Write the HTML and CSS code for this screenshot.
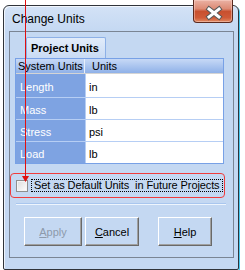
FILE: index.html
```html
<!DOCTYPE html>
<html>
<head>
<meta charset="utf-8">
<title>Change Units</title>
<link rel="stylesheet" href="styles.css">
</head>
<body>
<div class="window">
  <div class="titlebar"><span class="title">Change Units</span></div>
  <div class="closebtn">
    <svg width="40" height="23" viewBox="0 0 40 23">
      <path d="M15 9 L25 17 M25 9 L15 17" stroke="#5a5a5a" stroke-width="5" stroke-linecap="square" fill="none"/>
      <path d="M15 9 L25 17 M25 9 L15 17" stroke="#ffffff" stroke-width="3" stroke-linecap="square" fill="none"/>
    </svg>
  </div>
  <div class="client">
    <div class="tabs"><div class="tab">Project Units</div></div>
    <div class="grid">
      <div class="ghead">
        <div class="hc hc1">System Units</div>
        <div class="hc hc2">Units</div>
      </div>
      <div class="row first"><div class="lab">Length</div><div class="val">in</div></div>
      <div class="row"><div class="lab">Mass</div><div class="val">lb</div></div>
      <div class="row"><div class="lab">Stress</div><div class="val">psi</div></div>
      <div class="row last"><div class="lab">Load</div><div class="val">lb</div></div>
    </div>
    <div class="defaults">
      <span class="check"></span>
      <span class="focus">Set as Default Units&nbsp; in Future Projects</span>
    </div>
    <div class="sep"></div>
    <div class="buttons">
      <button class="btn apply" disabled><u>A</u>pply</button>
      <button class="btn cancel"><u>C</u>ancel</button>
      <button class="btn help"><u>H</u>elp</button>
    </div>
  </div>
</div>
<svg class="arrow" width="10" height="183" viewBox="0 0 10 183">
  <line x1="4.5" y1="0" x2="4.5" y2="177" stroke="#e01010" stroke-width="1"/>
  <polygon points="1,176 8,176 4.5,182" fill="#e01010"/>
</svg>
</body>
</html>
```

FILE: styles.css
```css
html, body {
  margin: 0;
  padding: 0;
}
body {
  width: 245px;
  height: 270px;
  overflow: hidden;
  background: #ffffff;
  position: relative;
  font-family: "Liberation Sans", Arial, sans-serif;
  font-size: 11px;
  color: #000;
}
.window {
  position: relative;
  box-sizing: border-box;
  margin: 5px 0 0 3px;
  width: 236px;
  height: 265px;
  border: 1px solid #30343a;
  border-radius: 6px 6px 2px 2px;
  background: linear-gradient(#d3e2f6 0px, #c4d8f2 26px, #c4d8f2 100%);
  box-shadow: 1px 1px 0 #46c8ee, inset 1px 1px 0 rgba(255,255,255,0.7);
}
.titlebar {
  height: 25px;
  display: flex;
  align-items: center;
  padding-left: 8px;
  padding-top: 1px;
  box-sizing: border-box;
}
.title {
  font-size: 12px;
  color: #000;
}
.closebtn {
  position: absolute;
  left: 189px;
  top: -6px;
  width: 40px;
  height: 23px;
  box-sizing: border-box;
  border: 1px solid #5b2a20;
  border-top: none;
  border-radius: 0 0 4px 4px;
  background: linear-gradient(#eab2a4 0%, #dd8a74 40%, #c8502f 52%, #cf5a38 80%, #e08a62 100%);
  box-shadow: inset 0 0 0 1px rgba(255,220,210,0.45);
  overflow: hidden;
}
.closebtn svg {
  display: block;
}
.client {
  box-sizing: border-box;
  margin: 0 4px 0 5px;
  height: 227px;
  border: 1px solid #7a8594;
  background: #c4d8f2;
}
.tabs {
  padding: 5px 0 0 16px;
  display: flex;
}
.tab {
  box-sizing: border-box;
  width: 80px;
  height: 21px;
  border: 1px solid #8db0e6;
  border-bottom: none;
  border-radius: 2px 2px 0 0;
  background: linear-gradient(#e2ecfa, #c9dbf4);
  font-weight: bold;
  line-height: 20px;
  padding-left: 4px;
}
.grid {
  box-sizing: border-box;
  margin-left: 5px;
  width: 209px;
  border: 1px solid #78a1e6;
  background: #fff;
}
.ghead {
  display: flex;
  height: 15px;
  box-sizing: border-box;
  border-bottom: 1px solid #d4d4d4;
  background: linear-gradient(#c7d9f6, #8fb1e8);
}
.hc {
  line-height: 14px;
}
.hc1 {
  width: 69px;
  padding-left: 2px;
  box-sizing: border-box;
  border-right: 1px solid #e6eefa;
}
.hc2 {
  padding-left: 7px;
}
.row {
  display: flex;
  height: 22px;
  box-sizing: border-box;
  border-bottom: 1px solid #b6cef4;
}
.row.first {
  height: 24px;
}
.row.last {
  border-bottom: none;
  height: 21px;
}
.lab {
  width: 70px;
  box-sizing: border-box;
  background: #7ea3e2;
  color: #fff;
  padding: 2px 0 0 4px;
  display: flex;
  align-items: center;
  border-right: 1px solid #b6cef4;
}
.val {
  flex: 1;
  padding: 2px 0 0 3px;
  display: flex;
  align-items: center;
}
.defaults {
  box-sizing: border-box;
  margin: 9px 0 0 0;
  width: 215px;
  height: 25px;
  border: 1px solid #f03c3c;
  border-radius: 4px;
  display: flex;
  align-items: center;
  padding-left: 5px;
}
.check {
  box-sizing: border-box;
  width: 12px;
  height: 12px;
  border: 1px solid #8e8f8f;
  background: linear-gradient(135deg, #dcdcdc, #ffffff);
  box-shadow: inset 0 0 0 1px #f4f4f4;
}
.focus {
  margin-left: 3px;
  border: 1px dotted #000;
  height: 13px;
  box-sizing: border-box;
  line-height: 11px;
  padding: 0 2px;
  white-space: nowrap;
  letter-spacing: -0.1px;
}
.sep {
  margin: 6px 0 0 6px;
  width: 210px;
  height: 1px;
  background: #eef5fd;
  box-shadow: 0 -1px 0 #a9c6ee;
}
.buttons {
  display: flex;
  padding: 12px 0 0 14px;
}
.btn {
  box-sizing: border-box;
  height: 29px;
  margin: 0;
  padding: 0;
  font-family: "Liberation Sans", Arial, sans-serif;
  font-size: 11px;
  color: #000;
  background: #c4d8f2;
  border: 1px solid;
  border-color: #ffffff #696969 #696969 #ffffff;
  box-shadow: inset -1px -1px 0 #a0a0a0;
}
.btn u {
  text-decoration: underline;
}
.apply {
  width: 58px;
  color: #8d9aab;
}
.cancel {
  width: 54px;
  margin-left: 3px;
}
.help {
  width: 54px;
  margin-left: 19px;
}
.arrow {
  position: absolute;
  left: 21px;
  top: 0;
}
```
